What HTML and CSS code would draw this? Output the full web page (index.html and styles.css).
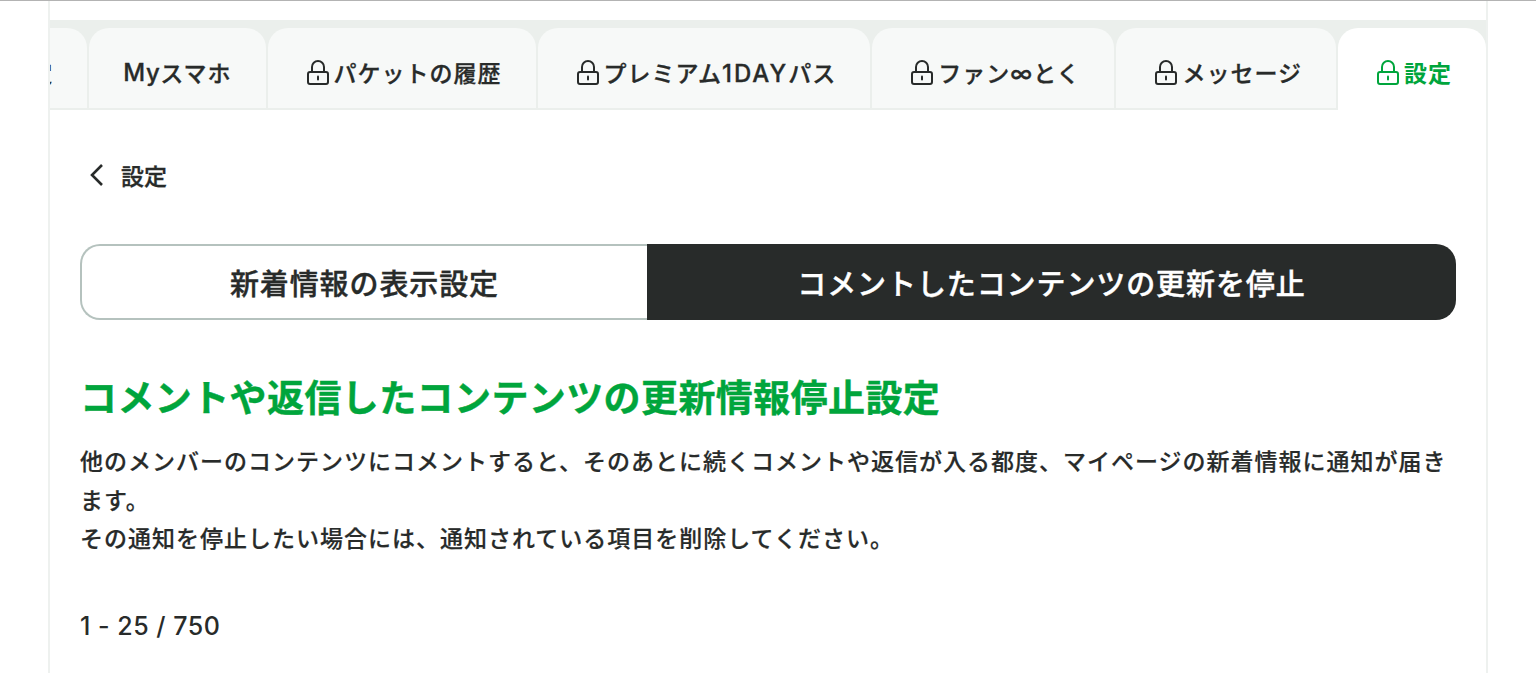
FILE: index.html
```html
<!DOCTYPE html>
<html lang="ja">
<head>
    <meta charset="UTF-8">
    <meta name="viewport" content="width=device-width, initial-scale=1.0">
    <title>設定</title>
    <link rel="stylesheet" href="styles.css">
</head>
<body>

    <div class="page">
        <ul class="tabs">
            <li class="tab">設定</li>
            <li class="tab"><span class="latin">My</span>スマホ</li>
            <li class="tab">
                <svg class="lock" viewBox="0 0 22 25"><rect x="1" y="12" width="20" height="12" rx="2"/><path d="M5 12V7a6 6 0 0 1 12 0v5"/><rect class="hole" x="10" y="15.500" width="2" height="5" rx="1"/></svg>
                <span>パケットの履歴</span>
            </li>
            <li class="tab">
                <svg class="lock" viewBox="0 0 22 25"><rect x="1" y="12" width="20" height="12" rx="2"/><path d="M5 12V7a6 6 0 0 1 12 0v5"/><rect class="hole" x="10" y="15.500" width="2" height="5" rx="1"/></svg>
                <span>プレミアム<span class="latin wide">1DAY</span>パス</span>
            </li>
            <li class="tab">
                <svg class="lock" viewBox="0 0 22 25"><rect x="1" y="12" width="20" height="12" rx="2"/><path d="M5 12V7a6 6 0 0 1 12 0v5"/><rect class="hole" x="10" y="15.500" width="2" height="5" rx="1"/></svg>
                <span>ファン∞とく</span>
            </li>
            <li class="tab">
                <svg class="lock" viewBox="0 0 22 25"><rect x="1" y="12" width="20" height="12" rx="2"/><path d="M5 12V7a6 6 0 0 1 12 0v5"/><rect class="hole" x="10" y="15.500" width="2" height="5" rx="1"/></svg>
                <span>メッセージ</span>
            </li>
            <li class="tab active">
                <svg class="lock" viewBox="0 0 22 25"><rect x="1" y="12" width="20" height="12" rx="2"/><path d="M5 12V7a6 6 0 0 1 12 0v5"/><rect class="hole" x="10" y="15.500" width="2" height="5" rx="1"/></svg>
                <span>設定</span>
            </li>
        </ul>

        <div class="content">
            <a class="back" href="#">
                <svg class="chevron" viewBox="0 0 16 24"><path d="M13 2 3 12l10 10"/></svg>
                設定
            </a>

            <div class="switcher">
                <a class="switch" href="#">新着情報の表示設定</a>
                <a class="switch on" href="#">コメントしたコンテンツの更新を停止</a>
            </div>

            <h1 class="title">コメントや返信したコンテンツの更新情報停止設定</h1>
            <p class="lead">他のメンバーのコンテンツにコメントすると、そのあとに続くコメントや返信が入る都度、マイページの新着情報に通知が届きます。<br>その通知を停止したい場合には、通知されている項目を削除してください。</p>

            <p class="count">1 - 25 / 750</p>
        </div>
    </div>

</body>
</html>
```

FILE: styles.css
```css
* {
    box-sizing: border-box;
}

html, body {
    height: 100%;
}

body {
    margin: 0;
    overflow: hidden;
    background: #fff;
    border-top: 1px solid #b3b3b3;
    color: #282b2a;
    font-family: Inter, "Noto Sans CJK JP", sans-serif;
}

.page {
    height: 100%;
    margin: 0 48px;
    padding-top: 19px;
    border-left: 2px solid #eef1ef;
    border-right: 2px solid #eef1ef;
}

/* tabs */
.tabs {
    display: flex;
    justify-content: flex-end;
    gap: 2px;
    height: 90px;
    margin: 0;
    padding: 8px 0 0;
    overflow: hidden;
    list-style: none;
    background: #ebefec;
}

.tab {
    display: flex;
    flex-shrink: 0;
    align-items: center;
    justify-content: center;
    height: 82px;
    padding: 8px 34px 0;
    border-bottom: 2px solid #ebefec;
    border-radius: 20px 20px 0 0;
    background: #f7f9f8;
    font-size: 23px;
    font-weight: 500;
    letter-spacing: 1px;
    -webkit-text-stroke: 0.300px;
    white-space: nowrap;
}

.tab.active {
    background: #fff;
    border-bottom-color: #fff;
    color: #00a53c;
    font-weight: 700;
    -webkit-text-stroke: 0;
}

.latin {
    font-size: 24px;
    letter-spacing: 0.500px;
}

.latin.wide {
    letter-spacing: 2px;
}

.lock {
    flex-shrink: 0;
    width: 22px;
    height: 25px;
    margin: 0 5px 0 5px;
    fill: none;
    stroke: currentColor;
    stroke-width: 2;
}

.lock .hole {
    fill: currentColor;
    stroke: none;
}

/* content */
.content {
    padding: 0 30px;
}

.back {
    display: flex;
    align-items: center;
    gap: 16px;
    margin: 48px 0 0 9px;
    color: #282b2a;
    font-size: 23px;
    font-weight: 500;
    -webkit-text-stroke: 0.300px;
    text-decoration: none;
}

.chevron {
    width: 16px;
    height: 24px;
    fill: none;
    stroke: currentColor;
    stroke-width: 2.600;
}

.switcher {
    display: flex;
    height: 76px;
    margin-top: 52px;
}

.switch {
    display: flex;
    flex: 1 1 auto;
    align-items: center;
    justify-content: center;
    border: 2px solid #b5c2be;
    border-right: 0;
    border-radius: 20px 0 0 20px;
    background: #fff;
    color: #282b2a;
    font-size: 29px;
    font-weight: 500;
    letter-spacing: 0.900px;
    -webkit-text-stroke: 0.400px;
    text-decoration: none;
}

.switch.on {
    padding: 0 2.500px;
    border: 0;
    border-radius: 0 20px 20px 0;
    background: #282b2a;
    color: #fff;
}

.title {
    margin: 52px 0 0;
    color: #00a53c;
    font-size: 37px;
    font-weight: 700;
    letter-spacing: 0.400px;
    -webkit-text-stroke: 0.400px;
    line-height: 54px;
}

.lead {
    margin: 17px 0 0;
    font-size: 23px;
    font-weight: 500;
    letter-spacing: 1px;
    -webkit-text-stroke: 0.200px;
    line-height: 38.500px;
}

.count {
    margin: 49px 0 0;
    font-size: 25px;
    font-weight: 500;
    letter-spacing: 0.500px;
    line-height: 36px;
}
```
